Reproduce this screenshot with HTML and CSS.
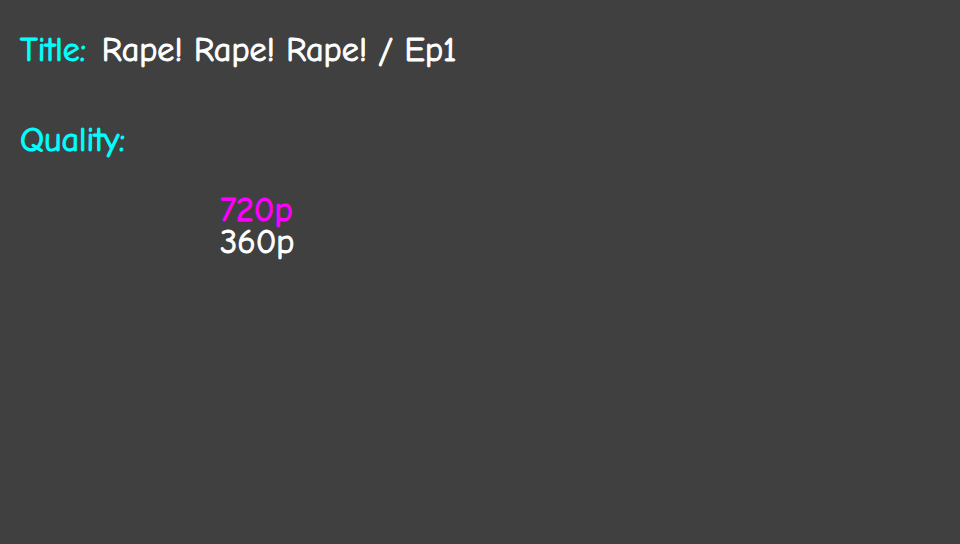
FILE: index.html
```html
<!DOCTYPE html>
<html lang="en">
<head>
<meta charset="utf-8">
<title>Quality selection</title>
<link rel="stylesheet" href="styles.css">
</head>
<body>
<main class="screen">
  <h1 class="line title"><span class="label">Title:</span> <span>Rape! Rape! Rape! / Ep1</span></h1>
  <h2 class="line label" id="quality">Quality:</h2>
  <ul class="options" aria-labelledby="quality">
    <li><button type="button" class="option selected" aria-pressed="true">720p</button></li>
    <li><button type="button" class="option" aria-pressed="false">360p</button></li>
  </ul>
</main>
</body>
</html>
```

FILE: styles.css
```css
* {
  box-sizing: border-box;
}

body {
  margin: 0;
  min-height: 100vh;
  background: #404040;
  color: #fff;
  font-family: "Comic Neue", "Comic Sans MS", Lato, sans-serif;
  font-size: 34px;
  line-height: 32px;
  -webkit-text-stroke: 1px currentColor;
}

.screen {
  display: flex;
  flex-direction: column;
  padding: 34px 20px;
}

.line {
  margin: 0 0 38px;
  font: inherit;
}

.title {
  display: flex;
  gap: 16px;
  margin-bottom: 58px;
}

.label {
  color: #0ff;
}

.options {
  margin: 0;
  padding: 0 0 0 200px;
  list-style: none;
}

.option {
  display: block;
  padding: 0;
  border: 0;
  background: none;
  color: inherit;
  font: inherit;
  cursor: pointer;
}

.option.selected {
  color: #f0f;
}
```
